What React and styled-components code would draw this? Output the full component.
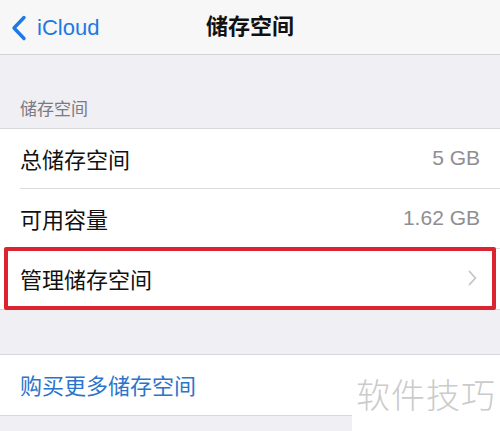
import React from 'react'
import styled, { createGlobalStyle } from 'styled-components'

const GlobalStyle = createGlobalStyle`
  html, body {
    margin: 0;
    padding: 0;
    background: #efeff4;
  }
  body {
    font-family: "Noto Sans CJK SC", "Liberation Sans", sans-serif;
  }
`

const Screen = styled.div`
  position: relative;
  width: 500px;
  height: 431px;
  overflow: hidden;
  background: #efeff4;
`

const NavBar = styled.div`
  display: grid;
  grid-template-columns: 1fr auto 1fr;
  align-items: center;
  height: 54px;
  background: #f7f7f7;
  border-bottom: 1px solid #d4d4d8;
`

const BackButton = styled.div`
  display: flex;
  align-items: center;
  gap: 10px;
  padding-left: 10px;
  padding-top: 2px;
  color: #1e78e6;
  font-family: "Liberation Sans", sans-serif;
  font-size: 22px;
`

const NavTitle = styled.div`
  font-size: 22px;
  font-weight: 700;
  color: #111;
  padding-bottom: 6px;
`

const SectionHeader = styled.div`
  padding: 41px 20px 8px;
  font-size: 17px;
  color: #7a7a7f;
  line-height: 24px;
`

const Group = styled.div`
  background: #fff;
  border-top: 1px solid #d8d8dc;
  border-bottom: 1px solid #d8d8dc;
  margin-top: ${p => p.$gap || 0}px;
`

const Row = styled.div`
  position: relative;
  display: flex;
  align-items: center;
  justify-content: space-between;
  height: 60px;
  padding: 0 20px 3px;
  box-sizing: border-box;
  &::before {
    content: '';
    display: ${p => (p.$last ? 'none' : 'block')};
    position: absolute;
    left: 20px;
    right: 0;
    bottom: 0;
    height: 1px;
    background: #dcdce0;
  }
  ${p => p.$marked && `
    &::after {
      content: '';
      position: absolute;
      left: 4px;
      right: 4px;
      top: -2px;
      bottom: -1px;
      border: 4px solid #dc2430;
      border-radius: 2px;
    }
  `}
`

const Label = styled.span`
  font-size: 22px;
  color: ${p => (p.$link ? '#2a74cc' : '#111')};
`

const Value = styled.span`
  font-family: "Liberation Sans", sans-serif;
  font-size: 21px;
  color: #8e8e93;
`

const Chevron = styled.svg`
  margin-right: 3px;
`

const Watermark = styled.div`
  position: absolute;
  right: 0;
  bottom: 0;
  width: 148px;
  height: 70px;
  background: #fff;
  display: flex;
  align-items: center;
  justify-content: center;
  font-size: 34px;
  font-weight: 300;
  color: #cbcbcb;
  letter-spacing: 1px;
  padding-bottom: 6px;
  box-sizing: border-box;
`

export default function App() {
  return (
    <Screen>
      <GlobalStyle />
      <NavBar>
        <BackButton>
          <svg width="17" height="26" viewBox="0 0 17 26">
            <path d="M14 2.5 L4 13 L14 23.5" fill="none" stroke="#1e78e6" strokeWidth="3.4" strokeLinecap="round" strokeLinejoin="round" />
          </svg>
          iCloud
        </BackButton>
        <NavTitle>储存空间</NavTitle>
        <div />
      </NavBar>
      <SectionHeader>储存空间</SectionHeader>
      <Group>
        <Row>
          <Label>总储存空间</Label>
          <Value>5 GB</Value>
        </Row>
        <Row>
          <Label>可用容量</Label>
          <Value>1.62 GB</Value>
        </Row>
        <Row $last $marked>
          <Label>管理储存空间</Label>
          <Chevron width="9" height="16" viewBox="0 0 9 16">
            <path d="M1.5 1.5 L7.5 8 L1.5 14.5" fill="none" stroke="#c4c4c8" strokeWidth="1.8" strokeLinecap="round" strokeLinejoin="round" />
          </Chevron>
        </Row>
      </Group>
      <Group $gap={44}>
        <Row $last>
          <Label $link>购买更多储存空间</Label>
        </Row>
      </Group>
      <Watermark>软件技巧</Watermark>
    </Screen>
  )
}
